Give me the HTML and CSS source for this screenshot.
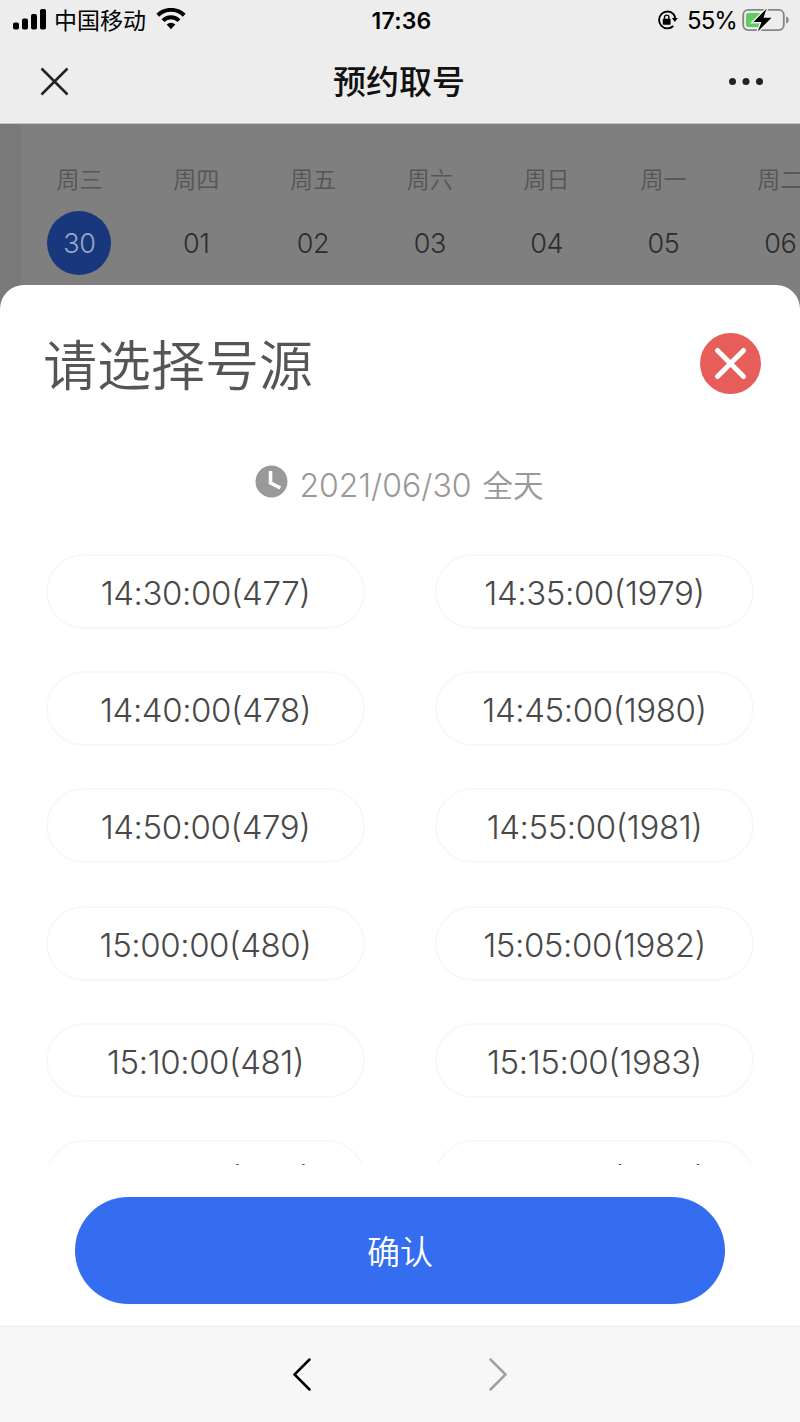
FILE: index.html
```html
<!DOCTYPE html>
<html lang="zh-CN">
<head>
<meta charset="utf-8">
<title>预约取号</title>
<link rel="stylesheet" href="styles.css">
</head>
<body>
<div class="screen">
  <header class="top">
    <div class="status">
      <div class="status-side">
        <svg class="signal" width="34" height="22" viewBox="0 0 34 22"><rect x="0" y="13.500" width="6" height="7" rx="1.8"/><rect x="9" y="9.500" width="6" height="11" rx="1.8"/><rect x="18" y="5" width="6" height="15.500" rx="1.800"/><rect x="27" y="0" width="6" height="20.500" rx="1.800"/></svg>
        <span class="carrier">中国移动</span>
        <svg class="wifi" width="30" height="22" viewBox="0 0 30 22"><path d="M1.800 7.200a19 19 0 0 1 26.400 0M7 12.600a11.500 11.500 0 0 1 16 0" fill="none" stroke="#000" stroke-width="4"/><path d="M10.700 16.600a6.200 6.200 0 0 1 8.600 0L15 21.200z"/></svg>
      </div>
      <span class="clock">17:36</span>
      <div class="status-side status-right">
        <svg class="lock" width="21" height="20" viewBox="0 0 21 20"><path d="M16.500 4.100A8.400 8.400 0 1 0 16.300 16M16.500 4.100q1.500 1.900 1.600 4.500" fill="none" stroke="#000" stroke-width="1.900"/><path d="M14.900 8h5.900l-3 4z"/><rect x="5.800" y="8.700" width="7.800" height="6" rx=".8"/><path d="M7.500 9V7.300a2.200 2.200 0 0 1 4.400 0V9" fill="none" stroke="#000" stroke-width="1.400"/></svg>
        <span class="percent">55%</span>
        <svg class="battery" width="48" height="24" viewBox="0 0 48 24"><rect x="1.200" y="1.900" width="40.600" height="20.200" rx="5" fill="none" stroke="#858587" stroke-width="1.800"/><path d="M6.500 5H21v14H6.500A2.500 2.500 0 0 1 4 16.500v-9A2.500 2.500 0 0 1 6.500 5z" fill="#5fcb62"/><path d="M44.200 8.200q2.600 1 2.600 3.800t-2.600 3.800z" fill="#858587"/><path d="M24.500.8 11.500 14h8l-3.700 9.500L29.500 9.700h-8z" stroke="#ededed" stroke-width="3"/><path d="M24.500.8 11.500 14h8l-3.700 9.500L29.500 9.700h-8z"/></svg>
      </div>
    </div>
    <nav class="nav">
      <svg width="30" height="30" viewBox="0 0 30 30"><path d="m1.500 1.500 26 26M27.500 1.500l-26 26" stroke="#222" stroke-width="2.500"/></svg>
      <h1 class="nav-title">预约取号</h1>
      <svg width="36" height="10" viewBox="0 0 36 10" fill="#222"><circle cx="4.500" cy="4.500" r="3.500"/><circle cx="18" cy="4.500" r="3.500"/><circle cx="31.500" cy="4.500" r="3.500"/></svg>
    </nav>
  </header>
  <main class="main">
    <section class="calendar">
      <div class="day"><span class="week">周三</span><span class="date date-on">30</span></div>
      <div class="day"><span class="week">周四</span><span class="date">01</span></div>
      <div class="day"><span class="week">周五</span><span class="date">02</span></div>
      <div class="day"><span class="week">周六</span><span class="date">03</span></div>
      <div class="day"><span class="week">周日</span><span class="date">04</span></div>
      <div class="day"><span class="week">周一</span><span class="date">05</span></div>
      <div class="day"><span class="week">周二</span><span class="date">06</span></div>
    </section>
    <section class="sheet">
      <div class="sheet-head">
        <h2 class="sheet-title">请选择号源</h2>
        <svg width="62" height="62" viewBox="0 0 62 62"><circle cx="30.500" cy="30.500" r="30.500" fill="#e65d5a"/><path d="m17.500 17.500 26 26M43.500 17.500l-26 26" stroke="#fff" stroke-width="5" stroke-linecap="round"/></svg>
      </div>
      <div class="when">
        <svg class="when-icon" width="33" height="33" viewBox="0 0 33 33"><circle cx="16.500" cy="16.500" r="16" fill="#999"/><path d="M15.500 6v12l9.800 4.800" fill="none" stroke="#fff" stroke-width="3.600"/></svg>
        <span class="when-date">2021/06/30</span><span class="when-part">全天</span>
      </div>
      <div class="slots">
        <div class="slot">14:30:00<span class="count">(477)</span></div><div class="slot">14:35:00<span class="count">(1979)</span></div>
        <div class="slot">14:40:00<span class="count">(478)</span></div><div class="slot">14:45:00<span class="count">(1980)</span></div>
        <div class="slot">14:50:00<span class="count">(479)</span></div><div class="slot">14:55:00<span class="count">(1981)</span></div>
        <div class="slot">15:00:00<span class="count">(480)</span></div><div class="slot">15:05:00<span class="count">(1982)</span></div>
        <div class="slot">15:10:00<span class="count">(481)</span></div><div class="slot">15:15:00<span class="count">(1983)</span></div>
        <div class="slot">15:20:00<span class="count">(482)</span></div><div class="slot">15:25:00<span class="count">(1984)</span></div>
      </div>
      <button class="confirm">确认</button>
    </section>
  </main>
  <footer class="toolbar">
    <svg width="20" height="34" viewBox="0 0 20 34"><path d="M16.500 1.500 1.500 16.500l15 15" fill="none" stroke="#000" stroke-width="2.500" stroke-linecap="round"/></svg>
    <svg width="20" height="34" viewBox="0 0 20 34"><path d="m2.500 1.500 15 15-15 15" fill="none" stroke="#a0a0a0" stroke-width="2.500" stroke-linecap="round"/></svg>
  </footer>
</div>
</body>
</html>
```

FILE: styles.css
```css
* { box-sizing: border-box; }
body { margin: 0; font-family: Inter, "Noto Sans CJK SC", sans-serif; }
svg { display: block; flex: none; }
.screen { width: 800px; height: 1422px; display: flex; flex-direction: column; overflow: hidden; background: #fff; }

.top { height: 124px; flex: none; background: #ededed; border-bottom: 1px solid #c4c4c4; color: #000; }
.status { height: 40px; display: grid; grid-template-columns: 1fr auto 1fr; align-items: center; padding: 0 10px 0 13px; }
.status-side { display: flex; align-items: center; height: 40px; }
.status-right { justify-content: flex-end; }
.carrier { font-size: 23px; line-height: 38px; margin: 1px 0 0 7px; }
.wifi { margin-left: 10px; margin-bottom: 3px; }
.clock { font-size: 23px; font-weight: 600; letter-spacing: .2px; padding-top: 1px; }
.lock { margin-right: 9px; }
.percent { font-size: 24px; letter-spacing: -.9px; margin: 0 5px 0 0; }
.nav { height: 83px; display: flex; align-items: center; justify-content: space-between; padding: 0 36px 0 40px; }
.nav-title { margin: 0; font-size: 33px; line-height: 48px; font-weight: 500; color: #111; }

.main { flex: 1; min-height: 0; display: flex; flex-direction: column; background: linear-gradient(90deg, #797979 21px, #7f7f7f 21px); }
.calendar { height: 161px; flex: none; display: flex; padding-left: 21px; overflow: hidden; }
.day { flex: 0 0 116.800px; display: flex; flex-direction: column; align-items: center; padding-top: 41px; }
.week { font-size: 23px; line-height: 30px; font-weight: 350; color: #555; }
.date { width: 64px; height: 64px; margin-top: 16px; padding-top: 1px; border-radius: 50%; font-size: 27px; letter-spacing: -.5px; line-height: 64px; font-weight: 300; text-align: center; color: #2c2c2c; }
.date-on { background: #19377c; color: #9ba7c4; }

.sheet { flex: 1; min-height: 0; display: flex; flex-direction: column; background: #fff; border-radius: 24px 24px 0 0; }
.sheet-head { height: 110px; flex: none; display: flex; align-items: flex-end; justify-content: space-between; padding: 0 38px 0 43px; }
.sheet-title { margin: 0 0 -12px; font-size: 54px; line-height: 80px; font-weight: 350; color: #555; }
.when { height: 50px; flex: none; margin-top: 64px; display: flex; justify-content: center; align-items: center; font-size: 32px; font-weight: 300; color: #999; }
.when-icon { margin: 0 11px 6px 0; }
.when-date { padding-top: 2px; }
.when-part { margin: 0 1px 0 11px; font-size: 30.500px; font-weight: 350; }
.slots { height: 611px; flex: none; margin-top: 45px; overflow: hidden; display: grid; grid-template-columns: 319px 319px; grid-auto-rows: 75px; justify-content: center; gap: 42.200px 70px; }
.slot { border: 2px solid #f8f8f8; border-radius: 38px; padding-top: 1px; font-size: 33px; letter-spacing: -.4px; line-height: 73px; font-weight: 300; text-align: center; color: #484848; white-space: nowrap; }
.count { font-feature-settings: "case"; }
.confirm { width: 650px; height: 107px; flex: none; margin: 32px auto 0; padding: 0 0 1px; border: 0; border-radius: 54px; background: #346df0; color: #fff; font: 350 33px "Noto Sans CJK SC", sans-serif; }

.toolbar { height: 96px; flex: none; display: flex; justify-content: center; align-items: center; gap: 175px; background: #f7f7f7; border-top: 1px solid #efefef; }
```
